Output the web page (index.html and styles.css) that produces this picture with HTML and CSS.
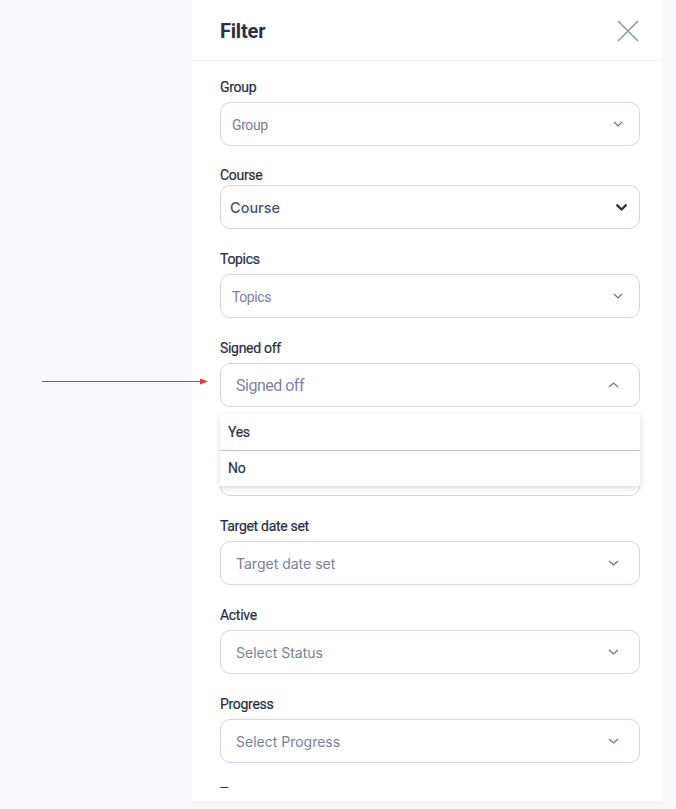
FILE: index.html
```html
<!DOCTYPE html>
<html lang="en">
<head>
<meta charset="utf-8">
<title>Filter</title>
<link rel="stylesheet" href="styles.css">
</head>
<body>
<svg class="arrow" width="168" height="9" viewBox="0 0 168 9" aria-hidden="true">
  <line x1="0" y1="4.5" x2="160" y2="4.5" stroke="#e53935" stroke-width="1.2"/>
  <polygon points="158,1.5 166,4.5 158,7.5" fill="#e53935"/>
</svg>
<div class="panel">
  <div class="header">
    <h1 class="title">Filter</h1>
    <svg class="close" width="22" height="22" viewBox="0 0 22 22" aria-label="Close">
      <path d="M1 1 L21 21 M21 1 L1 21" stroke="#8d95bd" stroke-width="1.6" fill="none"/>
    </svg>
  </div>
  <div class="body">
    <div class="field">
      <div class="label">Group</div>
      <div class="select select-sm">
        <span class="ph ph-sm">Group</span>
        <svg class="chev chev-sm" width="10" height="6" viewBox="0 0 10 6"><path d="M1 1 L5 5 L9 1" stroke="#6e7390" stroke-width="1.2" fill="none"/></svg>
      </div>
    </div>
    <div class="field">
      <div class="label label-tight">Course</div>
      <div class="select select-course">
        <span class="ph ph-course">Course</span>
        <svg class="chev chev-bold" width="11" height="7" viewBox="0 0 11 7"><path d="M1.3 1.3 L5.5 5.5 L9.7 1.3" stroke="#2b3050" stroke-width="2.4" fill="none" stroke-linecap="round" stroke-linejoin="round"/></svg>
      </div>
    </div>
    <div class="field">
      <div class="label">Topics</div>
      <div class="select select-sm">
        <span class="ph ph-sm">Topics</span>
        <svg class="chev chev-sm" width="10" height="6" viewBox="0 0 10 6"><path d="M1 1 L5 5 L9 1" stroke="#6e7390" stroke-width="1.2" fill="none"/></svg>
      </div>
    </div>
    <div class="field field-open">
      <div class="label">Signed off</div>
      <div class="select select-lg">
        <span class="ph ph-signed">Signed off</span>
        <svg class="chev" width="11" height="6" viewBox="0 0 11 6"><path d="M1 5 L5.5 1 L10 5" stroke="#6e7390" stroke-width="1.2" fill="none"/></svg>
      </div>
      <ul class="menu">
        <li class="option">Yes</li>
        <li class="option">No</li>
      </ul>
    </div>
    <div class="field">
      <div class="label"></div>
      <div class="select select-lg"></div>
    </div>
    <div class="field">
      <div class="label">Target date set</div>
      <div class="select select-lg">
        <span class="ph ph-lg">Target date set</span>
        <svg class="chev" width="11" height="6" viewBox="0 0 11 6"><path d="M1 1 L5.5 5 L10 1" stroke="#6e7390" stroke-width="1.2" fill="none"/></svg>
      </div>
    </div>
    <div class="field">
      <div class="label">Active</div>
      <div class="select select-lg">
        <span class="ph ph-lg">Select Status</span>
        <svg class="chev" width="11" height="6" viewBox="0 0 11 6"><path d="M1 1 L5.5 5 L10 1" stroke="#6e7390" stroke-width="1.2" fill="none"/></svg>
      </div>
    </div>
    <div class="field">
      <div class="label">Progress</div>
      <div class="select select-lg">
        <span class="ph ph-lg">Select Progress</span>
        <svg class="chev" width="11" height="6" viewBox="0 0 11 6"><path d="M1 1 L5.5 5 L10 1" stroke="#6e7390" stroke-width="1.2" fill="none"/></svg>
      </div>
    </div>
    <div class="field">
      <div class="label">T</div>
    </div>
  </div>
</div>
</body>
</html>
```
FILE: styles.css
```css
html, body {
  margin: 0;
  padding: 0;
}
body {
  background: #f9f9fc;
  font-family: Roboto, "Liberation Sans", sans-serif;
  color: #2f3452;
  height: 809px;
  overflow: hidden;
  position: relative;
}
.arrow {
  position: absolute;
  left: 42px;
  top: 377px;
}
.panel {
  margin-left: 192px;
  width: 470px;
  height: 802px;
  background: #ffffff;
  border-bottom: 1px solid #ededf3;
  display: flex;
  flex-direction: column;
  box-sizing: content-box;
}
.header {
  height: 60px;
  flex: none;
  border-bottom: 1px solid #f1f1f5;
  display: flex;
  align-items: center;
  justify-content: space-between;
  padding: 0 23px 0 28px;
}
.title {
  margin: 0;
  font-family: Roboto, sans-serif;
  font-weight: 700;
  font-size: 20px;
  letter-spacing: -0.2px;
  color: #2b3048;
  line-height: 24px;
  padding-top: 2px;
}
.close {
  display: block;
  margin-top: 2px;
}
.body {
  flex: none;
  height: 710px;
  overflow: hidden;
  padding: 17px 22px 0 28px;
}
.field {
  margin-bottom: 21px;
  position: relative;
}
.label {
  font-size: 14px;
  font-weight: 400;
  letter-spacing: -0.3px;
  line-height: 18px;
  height: 18px;
  margin-bottom: 6px;
  color: #272c48;
  -webkit-text-stroke: 0.2px #272c48;
}
.label-tight {
  margin-bottom: 1px;
}
.field:first-child {
  margin-bottom: 20px;
}
.select {
  height: 44px;
  box-sizing: border-box;
  border: 1px solid #d3d6e7;
  border-radius: 10px;
  display: flex;
  align-items: center;
  justify-content: space-between;
  background: #fff;
}
.select-sm {
  padding: 0 16px 0 11px;
}
.select-course {
  padding: 0 12px 0 9px;
}
.select-lg {
  padding: 0 20px 0 15px;
}
.ph {
  color: #7d8199;
  white-space: nowrap;
}
.ph-sm {
  font-size: 14px;
  letter-spacing: -0.4px;
  color: #7b7f93;
  padding-top: 1px;
}
.ph-course {
  font-family: Inter, Roboto, sans-serif;
  font-size: 14.5px;
  font-weight: 500;
  color: #4b5173;
  padding-top: 1px;
}
.ph-signed {
  font-size: 16px;
  letter-spacing: -0.5px;
  color: #80849f;
  padding-top: 1px;
}
.ph-lg {
  font-family: Inter, Roboto, sans-serif;
  font-size: 14px;
  color: #7a7fa0;
  padding-top: 1px;
}
.chev {
  display: block;
  flex: none;
}
.menu {
  position: absolute;
  left: 0;
  right: 0;
  top: 75px;
  margin: 0;
  padding: 0;
  list-style: none;
  background: #fff;
  box-shadow: 0 2px 6px rgba(40, 44, 80, 0.16);
  z-index: 2;
}
.option {
  height: 36px;
  line-height: 36px;
  padding-left: 8px;
  font-size: 14px;
  font-weight: 400;
  letter-spacing: -0.3px;
  color: #2a2f4c;
  -webkit-text-stroke: 0.2px #2a2f4c;
}
.option + .option {
  border-top: 1px solid #bcc0d8;
  height: 35px;
  line-height: 35px;
}
```
